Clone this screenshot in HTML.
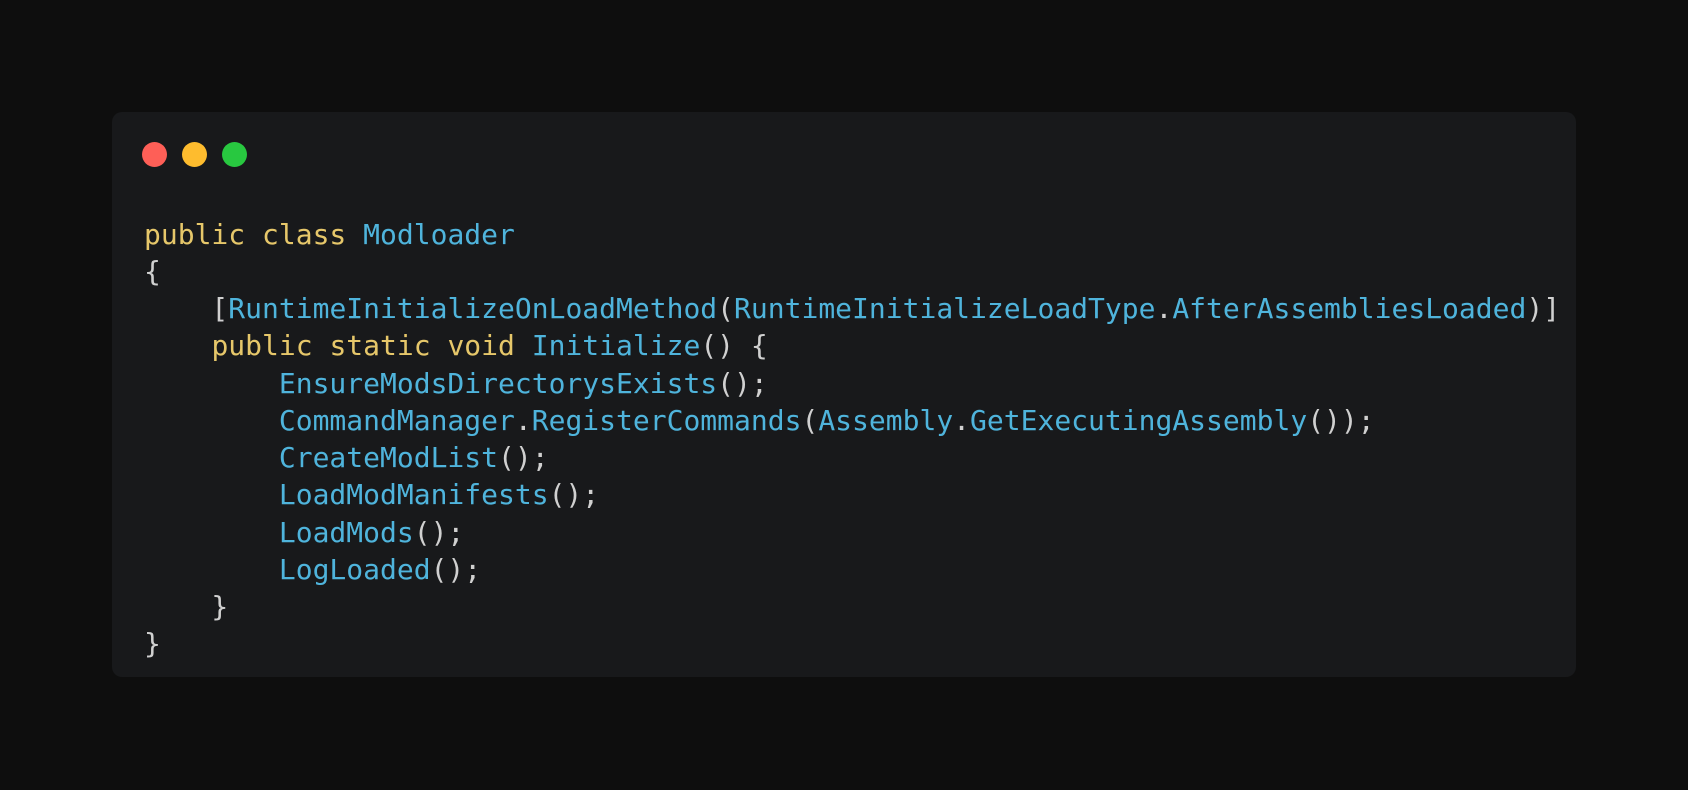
<!DOCTYPE html>
<html><head><style>
html,body{margin:0;padding:0;}
body{width:1688px;height:790px;background:#0e0e0e;position:relative;overflow:hidden;}
.win{position:absolute;left:112px;top:112px;width:1464px;height:565px;background:#18191b;border-radius:10px;}
.dot{position:absolute;top:142px;width:25px;height:25px;border-radius:50%;}
pre{position:absolute;left:144px;top:215.5px;margin:0;font-family:"DejaVu Sans Mono","Liberation Mono",monospace;font-size:28px;line-height:37.25px;color:#d0d0d0;}
.k{color:#e6c76a}.b{color:#4fb4dc}
</style></head><body>
<div class="win"></div>
<div class="dot" style="left:141.5px;background:#fe5f57"></div>
<div class="dot" style="left:181.5px;background:#febc2e"></div>
<div class="dot" style="left:221.5px;background:#28c840"></div>
<pre><span class="k">public class</span> <span class="b">Modloader</span>
{
    [<span class="b">RuntimeInitializeOnLoadMethod</span>(<span class="b">RuntimeInitializeLoadType</span>.<span class="b">AfterAssembliesLoaded</span>)]
    <span class="k">public static void</span> <span class="b">Initialize</span>() {
        <span class="b">EnsureModsDirectorysExists</span>();
        <span class="b">CommandManager</span>.<span class="b">RegisterCommands</span>(<span class="b">Assembly</span>.<span class="b">GetExecutingAssembly</span>());
        <span class="b">CreateModList</span>();
        <span class="b">LoadModManifests</span>();
        <span class="b">LoadMods</span>();
        <span class="b">LogLoaded</span>();
    }
}</pre>
</body></html>
